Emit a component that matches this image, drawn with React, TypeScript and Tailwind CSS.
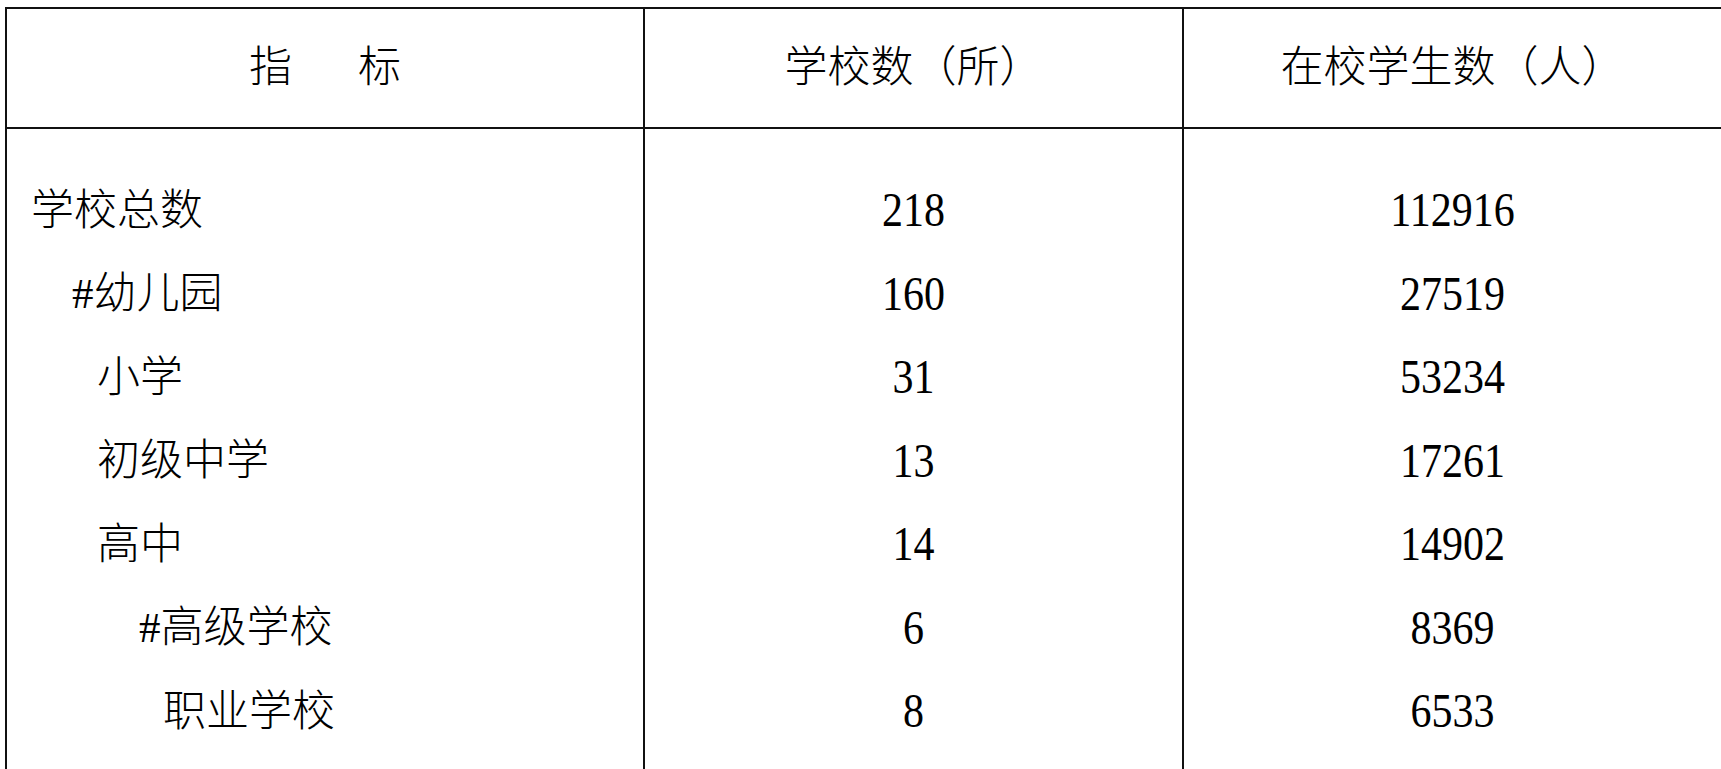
const rows = [
  { name: "学校总数", indent: "pl-[24px]", schools: "218", students: "112916" },
  { name: "#幼儿园", indent: "pl-[65px]", schools: "160", students: "27519" },
  { name: "小学", indent: "pl-[90px]", schools: "31", students: "53234" },
  { name: "初级中学", indent: "pl-[90px]", schools: "13", students: "17261" },
  { name: "高中", indent: "pl-[90px]", schools: "14", students: "14902" },
  { name: "#高级学校", indent: "pl-[132px]", schools: "6", students: "8369" },
  { name: "职业学校", indent: "pl-[156px]", schools: "8", students: "6533" },
]

export default function App() {
  return (
    <div
      className="w-full h-[769px] overflow-hidden bg-white pt-[7px] pl-[5px] text-black"
      style={{ fontFamily: '"Liberation Serif", "Noto Sans CJK SC", serif' }}
    >
      <div className="w-[1718px] border-l-2 border-t-2 border-[#111]">
        {/* header */}
        <div className="grid grid-cols-[638px_539px_539px] h-[120px] border-b-2 border-[#111] text-[43px] font-light">
          <div className="flex items-center justify-center border-r-2 border-[#111]">
            <span>指</span>
            <span className="ml-[66px]">标</span>
          </div>
          <div className="flex items-center justify-center border-r-2 border-[#111]">
            学校数（所）
          </div>
          <div className="flex items-center justify-center border-r-2 border-[#111]">
            在校学生数（人）
          </div>
        </div>

        {/* body */}
        <div className="grid grid-cols-[638px_539px_539px] h-[700px]">
          <div className="border-r-2 border-[#111] pt-[40px]">
            {rows.map((r) => (
              <div key={r.name} className={`h-[83.5px] flex items-center text-[43px] font-light ${r.indent}`}>
                {r.name}
              </div>
            ))}
          </div>
          <div className="border-r-2 border-[#111] pt-[40px]">
            {rows.map((r) => (
              <div key={r.name} className="h-[83.5px] flex items-center justify-center text-[42px]">
                <span className="inline-block scale-y-[1.15]">{r.schools}</span>
              </div>
            ))}
          </div>
          <div className="border-r-2 border-[#111] pt-[40px]">
            {rows.map((r) => (
              <div key={r.name} className="h-[83.5px] flex items-center justify-center text-[42px]">
                <span className="inline-block scale-y-[1.15]">{r.students}</span>
              </div>
            ))}
          </div>
        </div>
      </div>
    </div>
  )
}
